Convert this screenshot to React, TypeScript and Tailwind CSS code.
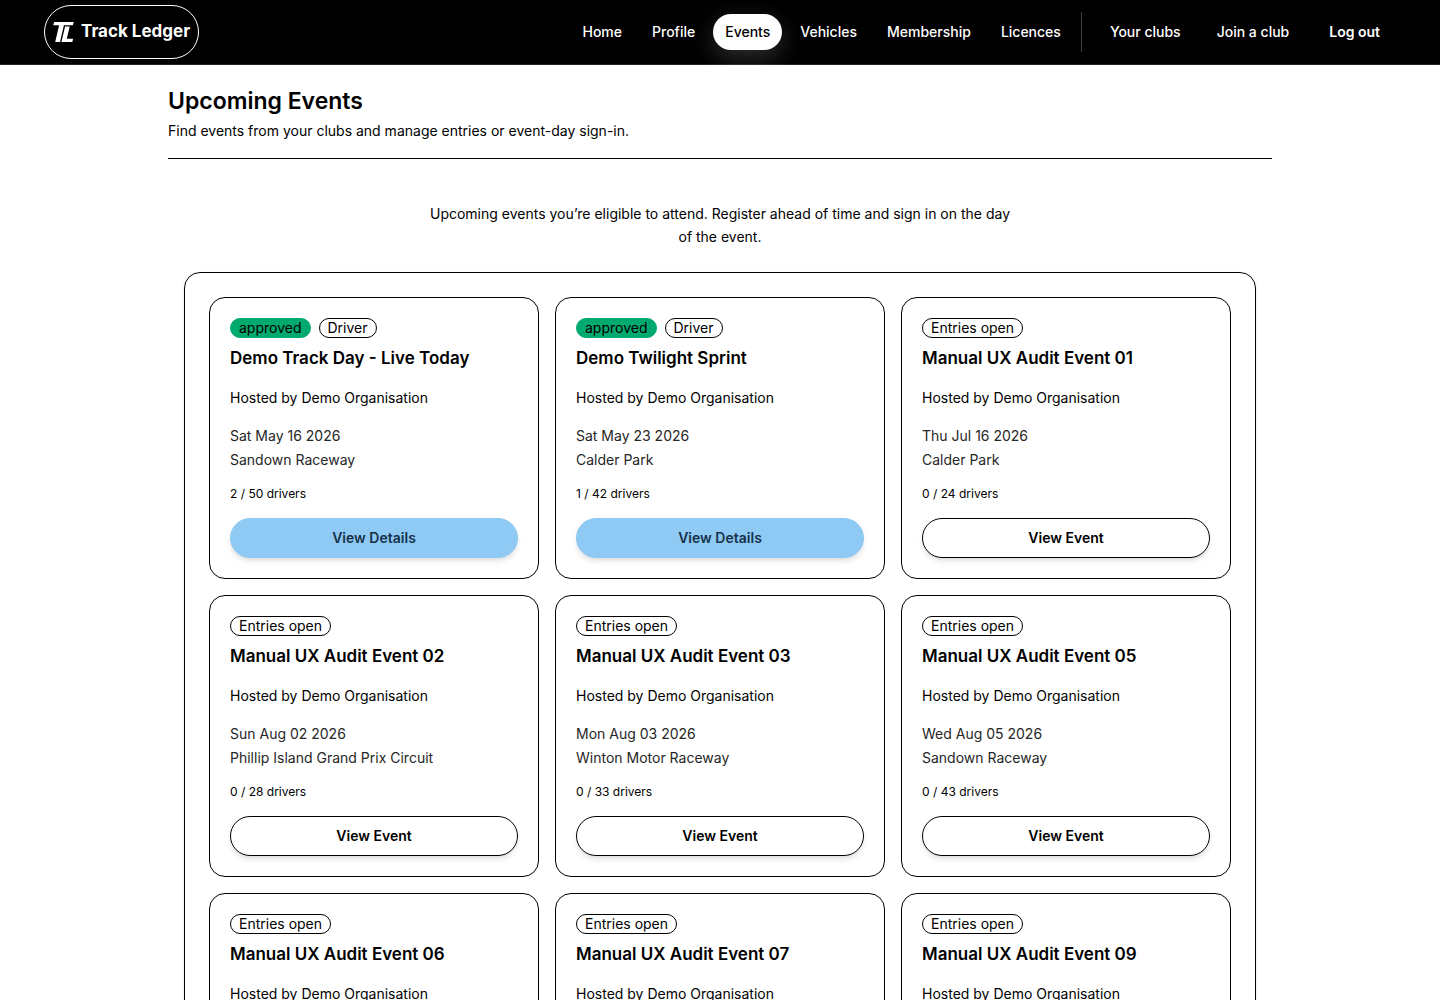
import clsx from 'clsx';

type EventItem = {
  title: string;
  date: string;
  venue: string;
  entered: number;
  capacity: number;
  approved?: boolean;
};

const navLinks = ['Home', 'Profile', 'Events', 'Vehicles', 'Membership', 'Licences'];

const events: EventItem[] = [
  { title: 'Demo Track Day - Live Today', date: 'Sat May 16 2026', venue: 'Sandown Raceway', entered: 2, capacity: 50, approved: true },
  { title: 'Demo Twilight Sprint', date: 'Sat May 23 2026', venue: 'Calder Park', entered: 1, capacity: 42, approved: true },
  { title: 'Manual UX Audit Event 01', date: 'Thu Jul 16 2026', venue: 'Calder Park', entered: 0, capacity: 24 },
  { title: 'Manual UX Audit Event 02', date: 'Sun Aug 02 2026', venue: 'Phillip Island Grand Prix Circuit', entered: 0, capacity: 28 },
  { title: 'Manual UX Audit Event 03', date: 'Mon Aug 03 2026', venue: 'Winton Motor Raceway', entered: 0, capacity: 33 },
  { title: 'Manual UX Audit Event 05', date: 'Wed Aug 05 2026', venue: 'Sandown Raceway', entered: 0, capacity: 43 },
  { title: 'Manual UX Audit Event 06', date: 'Thu Aug 06 2026', venue: 'Calder Park', entered: 0, capacity: 48 },
  { title: 'Manual UX Audit Event 07', date: 'Fri Aug 07 2026', venue: 'Phillip Island Grand Prix Circuit', entered: 0, capacity: 24 },
  { title: 'Manual UX Audit Event 09', date: 'Sun Aug 09 2026', venue: 'Winton Motor Raceway', entered: 0, capacity: 34 },
];

function Logo() {
  return (
    <svg viewBox="0 0 22 22" className="h-[22px] w-[22px]" fill="currentColor" aria-hidden="true">
      <path d="M1.2 1H20.8l-1 3.3h-8.9L7 21H2.2L6.1 4.3H.2z" />
      <path d="M12.1 5.4h4.6l-2.9 12.3h6.3L19.3 21H8.4z" />
    </svg>
  );
}

function Navbar() {
  return (
    <header className="border-b border-neutral-800 bg-black text-white">
      <div className="flex h-16 items-center justify-between px-11">
        <a href="#home" className="flex h-[54px] items-center gap-1.5 rounded-full border border-white px-2 text-[17px] font-bold">
          <Logo />
          Track Ledger
        </a>
        <nav className="flex items-center text-sm font-medium">
          <div className="flex items-center gap-1.5">
            {navLinks.map((label) => (
              <a
                key={label}
                href={`#${label.toLowerCase()}`}
                className={clsx(
                  'rounded-full px-3 py-2',
                  label === 'Events' && 'bg-white text-black shadow-[0_8px_24px_rgba(255,255,255,0.18)]'
                )}
              >
                {label}
              </a>
            ))}
          </div>
          <div className="ml-2 flex h-10 items-center gap-3 border-l border-neutral-700 pl-4">
            <a href="#clubs" className="px-3 py-2">Your clubs</a>
            <a href="#join" className="px-3 py-2">Join a club</a>
            <button type="button" className="px-4 py-2 font-semibold">Log out</button>
          </div>
        </nav>
      </div>
    </header>
  );
}

function Badge({ children, solid }: { children: string; solid?: boolean }) {
  return (
    <span
      className={clsx(
        'flex h-5 items-center rounded-full border px-2 text-sm',
        solid ? 'border-[#00a96e] bg-[#00a96e]' : 'border-black'
      )}
    >
      {children}
    </span>
  );
}

function EventCard({ event }: { event: EventItem }) {
  return (
    <article className="rounded-2xl border border-black bg-white p-5">
      <div className="flex gap-2">
        {event.approved ? (
          <>
            <Badge solid>approved</Badge>
            <Badge>Driver</Badge>
          </>
        ) : (
          <Badge>Entries open</Badge>
        )}
      </div>
      <h2 className="mt-2 text-[17px] leading-6 font-semibold">{event.title}</h2>
      <p className="mt-4 text-sm leading-6">Hosted by Demo Organisation</p>
      <div className="mt-4 space-y-1 text-sm text-neutral-800">
        <p>{event.date}</p>
        <p>{event.venue}</p>
      </div>
      <p className="mt-4 text-xs">
        {event.entered} / {event.capacity} drivers
      </p>
      <button
        type="button"
        className={clsx(
          'mt-4 h-10 w-full rounded-full border text-sm font-semibold shadow-md',
          event.approved ? 'border-[#8ecaf4] bg-[#8ecaf4] text-[#16324a]' : 'border-black bg-white'
        )}
      >
        {event.approved ? 'View Details' : 'View Event'}
      </button>
    </article>
  );
}

export default function App() {
  return (
    <div className="min-h-screen bg-white font-['Inter',sans-serif] text-black">
      <Navbar />
      <main className="mx-auto max-w-6xl px-6 pt-5">
        <div className="border-b border-black pb-4">
          <h1 className="text-[23px] leading-8 font-semibold">Upcoming Events</h1>
          <p className="mt-0.5 text-sm leading-[23px]">
            Find events from your clubs and manage entries or event-day sign-in.
          </p>
        </div>
        <section className="px-4 pt-[43px] pb-8">
          <p className="mx-auto max-w-[592px] text-center text-sm leading-[23px]">
            Upcoming events you’re eligible to attend. Register ahead of time and sign in on the day of the event.
          </p>
          <div className="mt-6 grid gap-4 rounded-2xl border border-black p-6 shadow-sm md:grid-cols-2 lg:grid-cols-3">
            {events.map((event) => (
              <EventCard key={event.title} event={event} />
            ))}
          </div>
        </section>
      </main>
    </div>
  );
}
